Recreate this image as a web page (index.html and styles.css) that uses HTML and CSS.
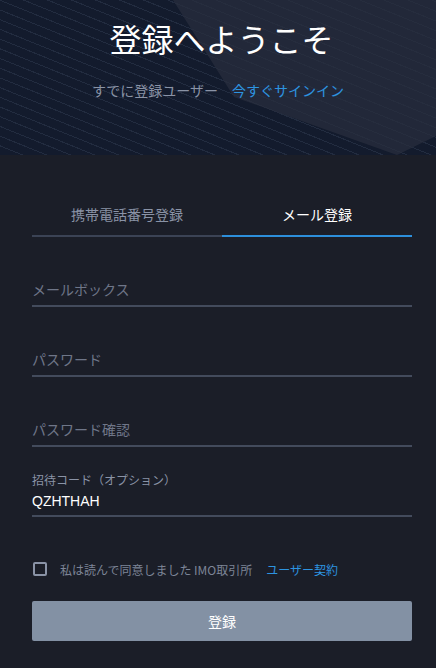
FILE: index.html
```html
<!DOCTYPE html>
<html>
<head lang="ja">
    <meta charset="UTF-8">
    <title>登録へようこそ</title>
    <link rel="stylesheet" href="styles.css">
</head>
<body>
<div class="reg-header">
    <div class="reg-header-shape"></div>
    <h1 class="reg-title">登録へようこそ</h1>
    <p class="reg-sub">すでに登録ユーザー<a href="javascript:void(0);" class="reg-link">今すぐサインイン</a></p>
</div>
<div class="reg-main">
    <div class="reg-tabs">
        <a href="javascript:void(0);" class="reg-tab">携帯電話番号登録</a>
        <a href="javascript:void(0);" class="reg-tab active">メール登録</a>
    </div>
    <div class="reg-field">
        <input type="text" class="reg-input" placeholder="メールボックス">
    </div>
    <div class="reg-field">
        <input type="password" class="reg-input" placeholder="パスワード">
    </div>
    <div class="reg-field">
        <input type="password" class="reg-input" placeholder="パスワード確認">
    </div>
    <div class="reg-field reg-field-label">
        <label>招待コード（オプション）</label>
        <input type="text" class="reg-input" value="QZHTHAH">
    </div>
    <div class="reg-agree">
        <span class="reg-check"></span>
        <span>私は読んで同意しました IMO取引所</span>
        <a href="javascript:void(0);" class="reg-link">ユーザー契約</a>
    </div>
    <div class="reg-button"><a href="javascript:void(0);">登録</a></div>
</div>
</body>
</html>
```

FILE: styles.css
```css
html, body {
    margin: 0px;
    padding: 0px;
    height: 100%;
}
body {
    background: #1b1e28;
    font-family: "Noto Sans CJK JP", "Liberation Sans", sans-serif;
    overflow: hidden;
}
h1, p, a, div, label, input {
    margin: 0px;
    padding: 0px;
}
a {
    text-decoration: none;
}
.reg-header {
    position: relative;
    height: 155px;
    overflow: hidden;
    text-align: center;
    background-color: #131b2d;
    background-image: repeating-linear-gradient(22deg, transparent 0px, transparent 8px, rgba(120, 140, 170, 0.15) 8px, rgba(120, 140, 170, 0.15) 9px);
}
.reg-header-shape {
    position: absolute;
    top: 0px;
    left: 0px;
    width: 100%;
    height: 100%;
    background: rgba(40, 46, 62, 0.75);
    clip-path: polygon(173px 0px, 436px 0px, 436px 136px, 397px 155px, 234px 97px);
}
.reg-title {
    position: relative;
    padding: 16px 0px 0px 7px;
    font-size: 32px;
    line-height: 44px;
    font-weight: normal;
    color: #ffffff;
}
.reg-sub {
    position: relative;
    margin-top: 20px;
    font-size: 14px;
    line-height: 20px;
    color: #8a93a6;
}
.reg-sub .reg-link {
    margin-left: 14px;
}
.reg-link {
    color: #2d94e0;
}
.reg-main {
    padding: 42px 24px 0px 32px;
}
.reg-tabs {
    display: flex;
}
.reg-tab {
    flex: 1;
    height: 38px;
    line-height: 34px;
    text-align: center;
    font-size: 14px;
    color: #8a93a6;
    border-bottom: 2px solid #3b4355;
}
.reg-tab.active {
    color: #ffffff;
    border-bottom-color: #2d8fdb;
}
.reg-field {
    margin-top: 36px;
    border-bottom: 2px solid #434b5c;
}
.reg-input {
    display: block;
    width: 100%;
    height: 32px;
    line-height: 32px;
    border: none;
    outline: none;
    background: transparent;
    font-family: "Noto Sans CJK JP", "Liberation Sans", sans-serif;
    font-size: 14px;
    color: #ffffff;
}
.reg-input::placeholder {
    color: #6f7688;
}
.reg-field-label {
    margin-top: 24px;
    padding-bottom: 2px;
}
.reg-field-label label {
    display: block;
    font-size: 12px;
    line-height: 18px;
    color: #8a93a6;
}
.reg-field-label .reg-input {
    height: 24px;
    line-height: 24px;
    font-family: "Liberation Sans", sans-serif;
}
.reg-agree {
    display: flex;
    align-items: center;
    margin-top: 42px;
    height: 20px;
    font-size: 12px;
    color: #7d8597;
}
.reg-check {
    width: 10px;
    height: 10px;
    margin: 0px 13px 0px 1px;
    border: 2px solid #8a93a6;
    border-radius: 2px;
}
.reg-agree .reg-link {
    margin-left: 14px;
}
.reg-button {
    margin-top: 22px;
    height: 40px;
    line-height: 40px;
    text-align: center;
    background: #8391a4;
    border-radius: 2px;
}
.reg-button a {
    display: block;
    font-size: 14px;
    color: #ffffff;
}
```
